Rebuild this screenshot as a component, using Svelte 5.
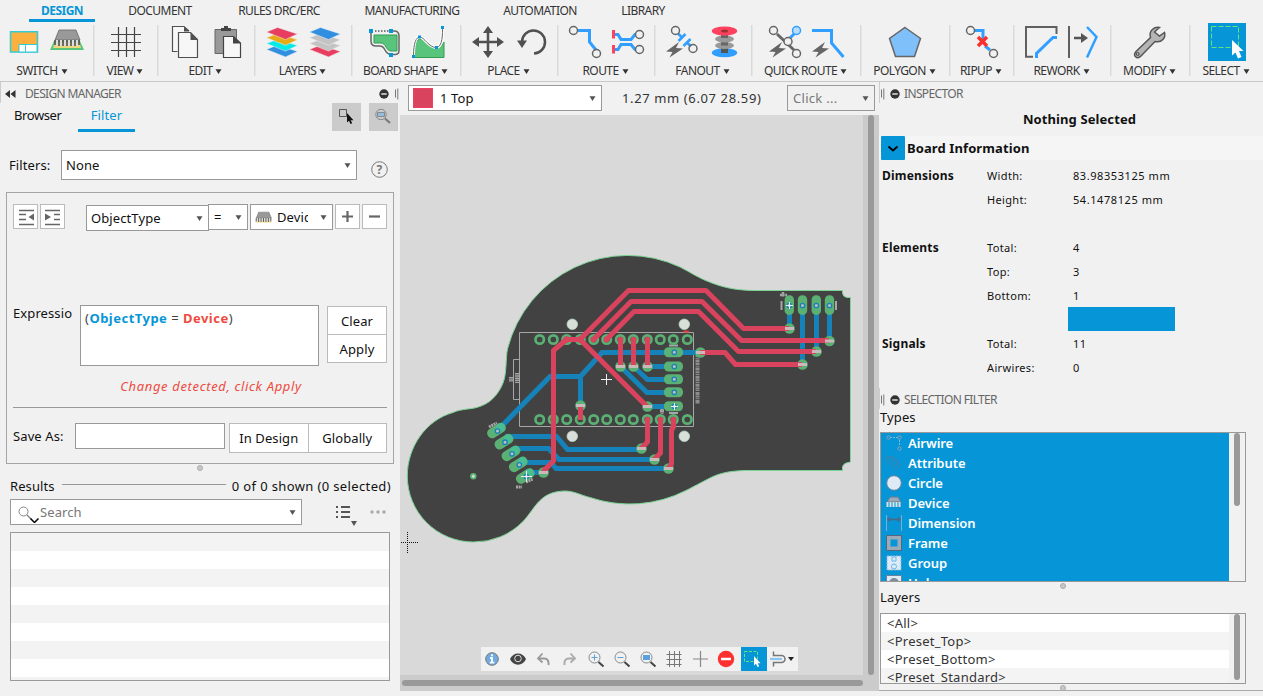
<script>
  const tabs = ['DESIGN', 'DOCUMENT', 'RULES DRC/ERC', 'MANUFACTURING', 'AUTOMATION', 'LIBRARY'];
  const tabWidths = [124, 72, 166, 100, 156, 50];
  const groups = [
    ['SWITCH', 0, 93], ['VIEW', 93, 64], ['EDIT', 157, 97], ['LAYERS', 254, 97], ['BOARD SHAPE', 351, 109],
    ['PLACE', 460, 97], ['ROUTE', 557, 97], ['FANOUT', 654, 97], ['QUICK ROUTE', 751, 109], ['POLYGON', 860, 89],
    ['RIPUP', 949, 64], ['REWORK', 1013, 97], ['MODIFY', 1110, 79], ['SELECT', 1189, 74]
  ];
  const padX = [539.7, 553.3, 566.7, 580.3, 593.7, 606.7, 620.3, 633.3, 647.3, 660.3, 673.3, 687.3];
  const vias = [
    [789.5, 328.5], [829.5, 341], [816.5, 351.5], [802.5, 364.5], [700.5, 352.5], [620.5, 366.5], [633.5, 366.5],
    [647.5, 366.5], [647.5, 406.5], [580.5, 405.5], [543.5, 472.5], [641.5, 448.5], [654.5, 459.5], [668.5, 468.5]
  ];
  const slant = [[496.5, 430.5], [504, 441.7], [511, 453.3], [518.3, 464.3], [525.3, 476]];
  const headX = [789.3, 802.5, 816.3, 829.5];
  const midY = [352.3, 366.5, 379.3, 392.3, 406.3];
  const info = [
    ['Dimensions', 'Width:', '83.98353125 mm'], ['', 'Height:', '54.1478125 mm'], ['', '', ''],
    ['Elements', 'Total:', '4'], ['', 'Top:', '3'], ['', 'Bottom:', '1'], ['', '', 'bar'],
    ['Signals', 'Total:', '11'], ['', 'Airwires:', '0']
  ];
  const types = ['Airwire', 'Attribute', 'Circle', 'Device', 'Dimension', 'Frame', 'Group', 'Hole'];
  const layers = ['<All>', '<Preset_Top>', '<Preset_Bottom>', '<Preset_Standard>'];
  const tools = ['info', 'eye', 'undo', 'redo', 'in', 'out', 'fit', 'grid', 'cross', 'stop', 'select', 'snap'];
</script>

{#snippet caret()}<svg class="caret" width="7" height="7" viewBox="0 0 7 7"><path d="M.5 1.2h6L3.5 6z" /></svg>{/snippet}
{#snippet minus()}<svg width="10" height="10" viewBox="0 0 10 10"><circle cx="5" cy="5" r="4.7" fill="#333" /><path d="M2.3 5h5.4" stroke="#eee" stroke-width="1.4" /></svg>{/snippet}
{#snippet grip()}<svg width="4" height="12" viewBox="0 0 4 12"><path d="M.5 1.5v8M2.8.5v11" stroke="#777" /></svg>{/snippet}
{#snippet bolt(x, y)}<path transform="translate({x} {y})" d="M13 0L0 9.500l6.500.5-3 5.500L17 6.500l-7-.5z" fill="#666" />{/snippet}
{#snippet chip(pcb)}
  {#if pcb}<path d="M54 41h26l4 9H50z" fill="#59c57c" /><path d="M55 42h24l2 6H53z" fill="#ebd87d" />{:else}<path d="M54 44h26v3H54z" fill="#ebd87d" />{/if}
  <path d="M59 30h17l4 10H55z" fill="#999" stroke="#666" stroke-width=".8" />
  <path d="M57 40v6M61 40v6M65 40v6M69 40v6M73 40v6M77 40v6" stroke="#ddd" stroke-width="2" />
  <path d="M55 40v5M59 40v6M63 40v6M67 40v6M71 40v6M75 40v6M79 40v5" stroke="#484848" stroke-width="1.5" />
{/snippet}
{#snippet tiles(x, c)}
  {#each [3, 2, 1, 0] as i}
    <path transform="translate({x} {27.5 + i * 5.8})" d="M0 4.5L11 0L31 6.5L19 12z" fill={c[i]} stroke="#f1f1f1" stroke-width=".5" />
  {/each}
{/snippet}

<div class="app">
  <nav class="tabs">
    {#each tabs as t, i}
      <span class="tab" class:on={i === 0} style:width="{tabWidths[i]}px"><b>{t}</b></span>
    {/each}
  </nav>
  <section class="ribbon">
    {#each groups as [name, x, w], i}
      <div class="group" style:width="{w}px">
        <svg class="gi" width={w} height="40" viewBox="{x} 22 {w} 40" fill="none">
          {#if i === 0}
            <path d="M10.5 31.8h27v20.3h-27z" fill="#fbb03f" stroke="#35cbd3" stroke-width="1.5" />
            <path d="M19 44.5h18v7.5H19zM25.5 44.5V52" fill="#fff" stroke="#35cbd3" />
            {@render chip(true)}
          {:else if i === 1}
            <path d="M118.500 27v30M126.500 27v30M134.500 27v30M111 34.500h30M111 42.500h30M111 50.500h30" stroke="#444" stroke-width="1.200" />
          {:else if i === 2}
            <g stroke="#505050" stroke-width="1.200" fill="#f7f7f7"><path d="M189 31l-5-4.500h-11.500v25h5" /><path d="M178.500 32.500h12l7 7v18h-19z" /></g>
            <path d="M190.500 32v8h7.500zM184 26.500v5h5z" fill="#505050" />
            <path d="M215 29.500h21.500v24H215z" fill="#999" stroke="#666" /><path d="M221 28h3v-2h4v2h3v3h-10z" fill="#444" />
            <path d="M223.500 36.500h10l7 6.500v14.500h-17z" fill="#f7f7f7" stroke="#444" stroke-width="1.200" /><path d="M233 36v7.500h8z" fill="#444" />
          {:else if i === 3}
            {@render tiles(266.500, ['#e73e5f', '#e8ab18', '#06eae9', '#318fe2'])}
            {@render tiles(309.500, ['#318fe2', '#c3c3c3', '#c3c3c3', '#e73e5f'])}
          {:else if i === 4}
            <path d="M394 35h23v16h-6c-5 0-5-8-10-8h-7z" fill="#59c57c" stroke="#329c54" transform="translate(-20 0)" />
            <path d="M371 31v10q0 5 5 5h4q3 0 5 4t6 4.500h1M392 54.500h3q4 0 4-4V36q0-5-5-5h-3" stroke="#666" stroke-width="1.500" />
            <path d="M375 31h15" stroke="#555" stroke-width="1.500" stroke-dasharray="1.500 1.500" />
            <path d="M369 29h4v4h-4zM389 29h4v4h-4zM389 53h4v4h-4z" fill="#0696d7" />
            <path d="M413.500 57.500C413.500 45 416 39 421 39s9 9 15 9 7-5 8-6v15.500z" fill="#59c57c" stroke="#329c54" />
            <path d="M413.500 56C413.500 43 416 37 420 37s9 10.500 16 10.500 6.500-15 6.500-20" stroke="#fff" stroke-width="3" />
            <path d="M413.500 56C413.500 43 416 37 420 37s9 10.500 16 10.500 6.500-15 6.500-20" stroke="#666" />
            <path d="M412 55h3v3h-3zM418 35.500h3v3h-3zM435 46h3v3h-3zM441 26h3v3h-3z" fill="#0696d7" />
          {:else if i === 5}
            <path d="M488 31v22M477 42h22" stroke="#505050" stroke-width="2.500" />
            <path d="M488 26l5 7h-10zM488 58l5-7h-10zM472 42l7-5v10zM504 42l-7-5v10z" fill="#505050" />
            <path d="M522 42a11.500 11.500 0 1 1 12 11.500" stroke="#505050" stroke-width="2.500" /><path d="M517 40.500h10l-5 7.500z" fill="#505050" />
          {:else if i === 6}
            <path d="M578 30.500h11.500V42l6.500 8" stroke="#319fff" stroke-width="3" />
            <g stroke="#666" stroke-width="1.500"><circle cx="573.500" cy="30.500" r="4" /><circle cx="596.500" cy="53.500" r="4" /></g>
            <path d="M615 34.500h3l3 5h10l4-5h1M615 49.500h3l3-5h10l4 5h1" stroke="#319fff" stroke-width="3" />
            <path d="M612 30h3v8.500h-3zM612 45h3v8.500h-3z" fill="#ff405f" />
            <g stroke="#666" stroke-width="1.500"><circle cx="639.500" cy="34.500" r="4" /><circle cx="639.500" cy="49.500" r="4" /></g>
          {:else if i === 7}
            {@render bolt(666, 42)}
            <path d="M678 33.500l4 4M687 42.500l4 4M678.500 41l7-7M683.500 46l7-7" stroke="#319fff" stroke-width="2.600" />
            <g stroke="#666" stroke-width="1.500"><circle cx="675.500" cy="30.500" r="4" /><circle cx="693" cy="48.500" r="4" /></g>
            <ellipse cx="724.500" cy="52.800" rx="12.700" ry="4.500" fill="#319fff" />
            <path d="M721 34h7v19h-7z" fill="#555" /><ellipse cx="724.500" cy="45.500" rx="9.500" ry="3.500" fill="#999" /><ellipse cx="724.500" cy="39" rx="9.500" ry="3.500" fill="#999" />
            <path d="M721 34h7v4h-7zM721 42.500h7v3h-7z" fill="#666" /><ellipse cx="724.500" cy="31" rx="12.700" ry="4.500" fill="#ff405f" /><ellipse cx="724.500" cy="31" rx="3.500" ry="1.500" fill="#933" />
          {:else if i === 8}
            {@render bolt(769, 42)}
            <path d="M777 34l17 16" stroke="#666" stroke-width="3" /><path d="M790 38l5-5" stroke="#319fff" stroke-width="3" />
            <g stroke="#666" stroke-width="1.500" fill="#f1f1f1"><circle cx="773.500" cy="30.500" r="4" /><circle cx="788" cy="41.500" r="4" /><circle cx="796.500" cy="53.500" r="4" /></g>
            <circle cx="796.500" cy="30.500" r="4" fill="#b9ddfb" stroke="#319fff" stroke-width="1.500" />
            {@render bolt(812, 42)}<path d="M812 30.500h19.500V43l12 14" stroke="#319fff" stroke-width="3" />
          {:else if i === 9}
            <path d="M905 27.500l15.500 11-6 18h-19l-6-18z" fill="#7fc0fb" stroke="#666" stroke-width="1.500" />
          {:else if i === 10}
            <path d="M975 30.500h8V39M985 46l5 4" stroke="#319fff" stroke-width="3" />
            <g stroke="#666" stroke-width="1.500"><circle cx="970.500" cy="30.500" r="4" /><circle cx="993.500" cy="53.500" r="4" /></g>
            <path d="M978 37l9 9M987 37l-9 9" stroke="#fa302e" stroke-width="3.500" />
          {:else if i === 11}
            <path d="M1033 56.700h-7V27h30.500v7" stroke="#606060" stroke-width="2" /><path d="M1036.500 58v-4.500l16.500-16h4" stroke="#319fff" stroke-width="3" />
            <path d="M1069 26v32" stroke="#606060" stroke-width="2" /><path d="M1074 38h9" stroke="#555" stroke-width="2.500" /><path d="M1081 33l7 5-7 5z" fill="#555" />
            <path d="M1087 27l9.500 10-9.500 20.500" stroke="#319fff" stroke-width="2.500" />
          {:else if i === 12}
            <path d="M1159.500 27.500c-5-1-11 3-9 10l-14.500 14c-4 4 1 8.500 5 4.500l14-14.500c7 1.500 11-4 9.500-9l-5 3.500-5-4z" fill="#b5b5b5" stroke="#555" stroke-width="1.500" /><circle cx="1137.700" cy="54" r="1.500" stroke="#444" />
          {:else}
            <path d="M1208 23h38v38h-38z" fill="#0696d7" /><path d="M1211.500 26.500h27v21h-27z" stroke="#65e27b" stroke-dasharray="5 2" />
            <path d="M1232 40v15.500l3.500-3 2.500 6 3.500-1.500-2.500-6h4.500z" fill="#fff" />
          {/if}
        </svg>
        <div class="glabel" class:first={i === 0}><span>{name}</span>{@render caret()}</div>
      </div>
    {/each}
  </section>

  <main>
    <aside class="left">
      <header class="phead">
        <svg width="11" height="8" viewBox="0 0 11 8"><path d="M5 0v8L0 4zM10.500 0v8l-5-4z" fill="#333" /></svg>
        <span class="ptitle">DESIGN MANAGER</span><i class="grow"></i>{@render minus()}{@render grip()}
      </header>
      <div class="ltabs">
        <span class="lt browser">Browser</span><span class="lt filter">Filter</span><i class="grow"></i>
        <div class="gbtn"><svg width="28" height="28" fill="none"><path d="M7.500 6.500h7v7h-7z" stroke="#555" /><path d="M15 10v9.500l2-1.700 1.500 3.200 1.700-.8-1.500-3h2.800z" fill="#111" /></svg></div>
        <div class="gbtn"><svg width="28" height="28" fill="none"><circle cx="12" cy="11.500" r="5.200" stroke="#888" /><path d="M8.500 9.500h7v4h-7z" fill="#8fbfe4" stroke="#888" /><path d="M16 15.500l5 4.500" stroke="#777" stroke-width="2" /></svg></div>
      </div>
      <div class="filters">
        <span class="lbl">Filters:</span><div class="combo big"><span>None</span>{@render caret()}</div>
        <svg class="help" width="17" height="17"><circle cx="8.500" cy="8.500" r="7.800" fill="none" stroke="#777" /><text x="8.500" y="13" text-anchor="middle">?</text></svg>
      </div>
      <div class="box">
        <div class="cond">
          <div class="sq"><svg width="23" height="23"><path d="M5 5.500h15M5 9.500h7M5 14.500h7M5 19.500h15" stroke="#666" stroke-width="1.500" /><path d="M20 8.500v7l-5.500-3.500z" fill="#666" /></svg></div>
          <div class="sq"><svg width="23" height="23"><path d="M4 5.500h15M13 9.500h6M13 14.500h6M4 19.500h15" stroke="#666" stroke-width="1.500" /><path d="M4 8.500v7l6-3.500z" fill="#666" /></svg></div>
          <div class="combo ot"><span>ObjectType</span>{@render caret()}</div>
          <div class="combo eq"><span>=</span>{@render caret()}</div>
          <div class="combo dv"><svg width="17" height="12" viewBox="53 29 28 18" fill="none">{@render chip(false)}</svg><span class="clip">Device</span>{@render caret()}</div>
          <div class="sq pl"><svg width="23" height="23"><path d="M11.500 6v11M6 11.500h11" stroke="#666" stroke-width="2.200" /></svg></div>
          <div class="sq"><svg width="23" height="23"><path d="M6 11.500h11" stroke="#666" stroke-width="2.200" /></svg></div>
        </div>
        <div class="expr">
          <span class="el">Expression:</span>
          <div class="area">(<b class="bl">ObjectType</b> = <b class="rd">Device</b>)</div>
          <div class="stack"><span>Clear</span><span>Apply</span></div>
        </div>
        <p class="msg">Change detected, click Apply</p>
        <div class="save"><span>Save As:</span><div class="inp"></div><div class="pair"><span>In Design</span><span>Globally</span></div></div>
      </div>
      <i class="dot"></i>
      <div class="res"><span>Results</span><i></i><span class="cnt">0 of 0 shown (0 selected)</span></div>
      <div class="srow">
        <div class="combo search"><svg width="24" height="22" fill="none"><circle cx="8.500" cy="10.500" r="4.500" stroke="#888" /><path d="M12 14l4 4" stroke="#888" stroke-width="1.500" /><path d="M15.500 17.500l4 4 4-4" stroke="#000" stroke-width="1.500" /></svg><span>Search</span>{@render caret()}</div>
        <svg class="li" width="52" height="26"><path d="M5 8h9M5 13h9M5 18h9" stroke="#555" stroke-width="2" /><path d="M0 8h2M0 13h2M0 18h2" stroke="#555" stroke-width="2" /><path d="M15 22h6l-3 5z" fill="#555" /><g fill="#aaa"><circle cx="36" cy="13" r="1.700" /><circle cx="42" cy="13" r="1.700" /><circle cx="48" cy="13" r="1.700" /></g></svg>
      </div>
      <div class="table"></div>
    </aside>

    <section class="mid">
      <div class="bar">
        <div class="combo layer"><i></i><span>1 Top</span>{@render caret()}</div>
        <span class="coord">1.27 mm (6.07 28.59)</span>
        <div class="combo click"><span>Click ...</span>{@render caret()}</div>
      </div>
      <div class="canvas">
        <svg width="463" height="560" viewBox="400 115 463 560" fill="none">
          <path d="M453 412.500C463 408 472 410 481 406C492 402 499 393 503 383C507 373 505.500 358 507.500 349A124 124 0 0 1 680 267C690 272 700 279 712 283C725 288 738 290.500 756 290.500H842.500V293Q843 297 847 297.500H850.500V462Q843 463 842.500 467V470.500H745C730 471 720 473 711 477.500C700 483 695 486 686 490.500A124 124 0 0 1 590 497.500C580 495 574 491 565 491C540 491.500 536 507 523.500 521A68 68 0 0 1 473.300 542A66 66 0 0 1 407.300 476C407.300 447 426 420 453 412.500z" fill="#424242" stroke="#7bd394" />
          <g stroke="#a6a6a6"><path d="M519.500 332.500h174v94h-174zM519.500 359.500h-6v40h6" /><path d="M781.500 301v9M836 301v9M669 345.500h9M669 413h9" stroke-width="2" /><path d="M697.500 355v49" stroke-width="4" stroke-dasharray="2 .7 1 .8 3 .6" opacity=".75" /><path d="M517 373v10M511 377v5" stroke-width="4" stroke-dasharray="1.500 .7" /><path d="M780 295h7M783 292v5" stroke-width="2.500" stroke-dasharray="2 .6" /><path d="M489 427l8-4M516 487h6M526 482l7-3M660 411h4M662 408v6" stroke-width="3" stroke-dasharray="2 .6" /></g>
          <g stroke="#1583ba" stroke-width="5">
            <path d="M497 431L550 376.500H580.500L602 352.500H700M580.500 376.500V405M505 436.500H556.500L567.500 449.500H641M514 448.500H548.500L559 459.500H654M521 462.500H551L556 468.500H668M528 472.500H543M789.500 305V328M802.500 305V364M816.500 305V351M829.500 305V341M647.500 366.500H674M633.500 366.500L647.500 379.500H674M620.500 366.500L647 392.500H674M647.500 406.500H674" />
          </g>
          <g stroke="#5bb074" stroke-width="2.700">
            {#each padX as x}<circle cx={x} cy="339.500" r="4.200" /><circle cx={x} cy="419.500" r="4.200" />{/each}
          </g>
          <g fill="#5bb074">
            {#each slant as [x, y]}<rect x={x - 10} y={y - 5} width="20" height="10" rx="4.500" transform="rotate(-32 {x} {y})" /><ellipse cx={x + 5} cy={y - .5} rx="4.500" ry="4.200" fill="#49bd93" transform="rotate(-32 {x} {y})" />{/each}
            {#each headX as x}<rect x={x - 4.700} y="295.300" width="9.400" height="19.600" rx="4.500" />{/each}
            {#each midY as y}<rect x="664" y={y - 5} width="19" height="10" rx="4.500" />{/each}
            {#each vias as [x, y]}<circle cx={x} cy={y} r="5.300" />{/each}
            <circle cx="473.300" cy="476.300" r="3.200" />
          </g>
          <g stroke="#d9435e" stroke-width="5" stroke-linejoin="round">
            <path d="M580 339.500L628.500 290.500H706L743.500 328.500H789M593.500 339.500L631 301.500H702L741.500 340.500H829M606.500 339.500L634 311.500H698.500L738.500 351.500H816M700 352.500H725L735.500 364.500H802M580 339.500H566.500L553.500 350.500V461L543 471.500M580 339.500L647 406.500M620.500 339.500V366M633.500 339.500V366M647.500 339.500V366M580.500 405V420M647.500 419.500V442L641 448.500M660.500 419.500V453L654 459.500M673.500 419.500V427L671.500 430V464L668 468.500" />
          </g>
          <g fill="#d9435e"><circle cx="566.500" cy="339.500" r="3.300" /><circle cx="580.300" cy="339.500" r="3.300" /><circle cx="593.500" cy="339.500" r="3" /><circle cx="606.500" cy="339.500" r="3" /><circle cx="620.500" cy="339.500" r="2.800" /><circle cx="633.500" cy="339.500" r="2.800" /><circle cx="647.500" cy="339.500" r="2.800" /><circle cx="647.500" cy="419.500" r="2.800" /><circle cx="660.500" cy="419.500" r="2.800" /><circle cx="673.500" cy="419.500" r="2.800" /></g>
          {#each vias as [x, y]}<rect x={x - 4.500} y={y - 1.500} width="9" height="3" fill="#c9b9bb" />{/each}
          <g fill="#bdbdbd" stroke="#1583ba" stroke-width="1.300">
            {#each slant as [x, y]}<circle cx={x + 1} cy={y + .500} r="2.200" />{/each}
            {#each headX as x}<circle cx={x} cy="305.500" r="2.200" />{/each}
            {#each midY as y}<circle cx="674.300" cy={y} r="2.200" />{/each}
          </g>
          <g fill="#d9e0da" stroke="#bcd8c3" stroke-width=".7"><circle cx="572.300" cy="324.300" r="5.300" /><circle cx="684.300" cy="324.300" r="5.300" /><circle cx="572.300" cy="436.300" r="5.300" /><circle cx="684.300" cy="436.300" r="5.300" /><circle cx="473.300" cy="476.300" r="1.300" /></g>
          <path d="M606.500 374v11M601 379.500h11M789.500 302v7M786 305.500h7M674.500 403v7M671 406.500h7M526.500 471v11M521 476.500h11" stroke="#eee" />
          <path d="M683.500 331.500h5.500" stroke="#e83838" stroke-width="2" />
          <path d="M407.500 532v21M401 542.500h17" stroke="#111" stroke-dasharray="1 1" />
        </svg>
        <div class="toolbar">
          {#each tools as t}
            <svg class:sel={t === 'select'} width={t === 'snap' ? 31 : 26} height="24" fill="none">
              {#if t === 'info'}<circle cx="11" cy="12" r="6.300" fill="#6fabe0" stroke="#777" /><path d="M11 7.200v2M9 11h2v4.500M8.800 15.700h4.500" stroke="#fff" stroke-width="1.800" />
              {:else if t === 'eye'}<path d="M3 12c3-7.500 13-7.500 16 0-3 7.500-13 7.500-16 0z" fill="#444" /><circle cx="11" cy="11.500" r="3.300" stroke="#ddd" />
              {:else if t === 'undo'}<path d="M6 11.500h5c4 0 5 3 4.500 6.500" stroke="#999" stroke-width="2" /><path d="M9.500 6.500L5 11.500l4.500 4" stroke="#999" stroke-width="1.800" />
              {:else if t === 'redo'}<path d="M15 11.500h-5c-4 0-5 3-4.500 6.500" stroke="#aaa" stroke-width="2" /><path d="M11.500 6.500l4.500 5-4.500 4" stroke="#aaa" stroke-width="1.800" />
              {:else if t === 'in' || t === 'out' || t === 'fit'}
                <circle cx="9.500" cy="10.500" r="5.500" stroke="#888" /><path d="M13.500 15l5 4.500" stroke="#444" stroke-width="2" />
                {#if t === 'fit'}<path d="M6 8h7v5H6z" fill="#5aa2df" />{:else}<path d={t === 'in' ? 'M6.5 10.500h6M9.500 7.500v6' : 'M6.5 10.500h6'} stroke="#5aa2df" />{/if}
              {:else if t === 'grid'}<path d="M6.500 4v16M11.500 4v16M16.500 4v16M3.500 7.500h15M3.500 12.500h15M3.500 17.500h15" stroke="#777" />
              {:else if t === 'cross'}<path d="M11.500 4v16M4 12h15" stroke="#888" stroke-width="1.200" />
              {:else if t === 'stop'}<circle cx="11" cy="12" r="8.200" fill="#ff3030" /><path d="M6 12h10" stroke="#fff" stroke-width="2.500" />
              {:else if t === 'select'}<path d="M3.500 4.500h13v10h-13z" stroke="#65e27b" stroke-dasharray="3 1.500" /><path d="M13 9v9.500l2-1.700 1.500 3.200 1.700-.8-1.500-3h2.800z" fill="#fff" />
              {:else}<path d="M6.500 4.500v4h8a3.500 3.500 0 0 1 0 7h-8v4" stroke="#777" stroke-width="1.500" /><path d="M3 12h12" stroke="#8cc4f0" stroke-width="2.200" /><path d="M21 10h6l-3 4z" fill="#222" />{/if}
            </svg>
          {/each}
        </div>
      </div>
      <div class="vs"><i></i></div>
      <div class="hs"><i></i></div>
    </section>

    <aside class="right">
      <header class="phead r">{@render grip()}{@render minus()}<span class="ptitle">INSPECTOR</span></header>
      <h3>Nothing Selected</h3>
      <div class="sec"><i><svg width="24" height="24" fill="none"><path d="M7.500 10.500l4.500 4 4.500-4" stroke="#000" stroke-width="1.800" /></svg></i><b>Board Information</b></div>
      <div class="info">
        {#each info as [a, b, c]}<b>{a}</b><span>{b}</span>{#if c === 'bar'}<i class="fill"></i>{:else}<span class="val">{c}</span>{/if}{/each}
      </div>
      <header class="phead r sf">{@render grip()}{@render minus()}<span class="ptitle">SELECTION FILTER</span></header>
      <div class="cap">Types</div>
      <div class="list types">
        <div class="rows">
          {#each types as t, i}
            <div class="row"><svg width="16" height="16" fill="none">
              {#if i === 0}<path d="M4 2.500h8M13.500 5v6" stroke="#7bb9e0" stroke-dasharray="2 1" /><g stroke="#8f9fb0"><circle cx="2.500" cy="2.500" r="1.700" /><circle cx="13.500" cy="2.500" r="1.700" /><circle cx="13.500" cy="13.500" r="1.700" /></g>
              {:else if i === 1}<path d="M1 1.500h6l8 8-5 5-9-8zM5 7l3-3 4 5-3 2z" stroke="#3982ae" /><circle cx="4" cy="4" r="1" stroke="#3982ae" />
              {:else if i === 2}<circle cx="8" cy="8" r="7.300" fill="#dfeaf7" stroke="#68829b" />
              {:else if i === 3}<path d="M4 2h8l3 5H1z" fill="#9ba9b8" stroke="#647d92" /><path d="M1.500 7v5M4.500 7v5M7.500 7v5M10.500 7v5M13.500 7v5" stroke="#dae2e5" stroke-width="2" />
              {:else if i === 4}<path d="M.500 0v16M15.500 0v16" stroke="#7faed0" /><path d="M3 4.500h10M4.500 2.500l-2.500 2 2.500 2M11.500 2.500l2.500 2-2.500 2" stroke="#496a87" stroke-width="1.500" />
              {:else if i === 5}<path d="M2.500 2.500h11v11h-11z" stroke="#9ba9b8" stroke-width="4" /><path d="M.500.500h15v15H.500z" stroke="#53687d" />
              {:else if i === 6}<path d="M1 1h14v14H1z" fill="#dfeaf7" stroke="#91b7d6" stroke-dasharray="2 1" /><path d="M6 2h4v4H6z" stroke="#62b8ec" /><circle cx="8" cy="11.500" r="2.500" stroke="#62b8ec" />
              {:else}<path d="M.500.500h15v15H.500z" fill="#dfeaf7" stroke="#68829b" /><circle cx="8" cy="8" r="5" fill="#7f8b98" />{/if}
            </svg><b>{t}</b></div>
          {/each}
        </div>
        <i class="thumb"></i>
      </div>
      <i class="dot"></i>
      <div class="cap c2">Layers</div>
      <div class="list layers">
        <div class="rows">{#each layers as l}<div class="row">{l}</div>{/each}</div>
        <i class="thumb"></i>
      </div>
      <i class="dot d2"></i>
    </aside>
  </main>
</div>

<style>
  :global(body) { margin: 0; background: #f1f1f1; }
  .app, .app * { box-sizing: border-box; }
  .app { width: 1263px; height: 696px; overflow: hidden; display: flex; flex-direction: column; background: #f1f1f1; font: 13px/18px "Noto Sans", "Open Sans", sans-serif; color: #111; white-space: nowrap; letter-spacing: .1px; }
  i { display: block; font-style: normal; }
  svg { display: block; flex: none; }
  .grow { flex: 1; }
  .tabs { display: flex; height: 22px; flex: none; font-size: 12px; line-height: 21px; letter-spacing: -.55px; color: #333; }
  .tab { text-align: center; }
  .tab b { display: inline-block; font-weight: 400; height: 22px; }
  .tab.on b { font-weight: 700; color: #0696d7; padding: 0 11.5px; border-bottom: 3px solid #0696d7; letter-spacing: -.5px; }
  .ribbon { display: flex; height: 60px; flex: none; border-bottom: 1px solid #c8c8c8; }
  .group { height: 60px; background: linear-gradient(#dadada, #dadada) left 3px / 1.500px 51px no-repeat; }
  .group:first-child { background: none; }
  .glabel { display: flex; align-items: center; justify-content: center; gap: 3px; font-size: 12px; line-height: 18px; height: 18px; color: #333; letter-spacing: -.55px; }
  .glabel .caret, .glabel :global(.caret) { fill: #333; }
  .first { padding-right: 9px; }
  .caret { fill: #555; }
  main { display: flex; flex: 1; min-height: 0; }
  .left { width: 400px; display: flex; flex-direction: column; }
  .phead { display: flex; align-items: center; height: 21px; padding: 2px 1px 0 4px; flex: none; color: #666; font-size: 12px; letter-spacing: -.65px; border-left: 1px solid #ccc; }
  .left .ptitle { margin-left: 9px; }
  .left .phead > :global(svg:last-child) { margin-left: 6px; }
  .ltabs { display: flex; height: 29px; flex: none; gap: 8px; padding-right: 2px; }
  .lt { height: 29px; line-height: 25px; }
  .browser { margin-left: 14px; width: 48px; letter-spacing: -.4px; }
  .filter { margin-left: 8px; width: 57px; text-align: center; color: #0696d7; border-bottom: 3px solid #0696d7; }
  .gbtn { width: 29px; height: 28px; background: #cbcbcb; }
  .filters { display: flex; align-items: center; margin-top: 18px; height: 30px; padding-left: 9px; flex: none; }
  .lbl { width: 52px; }
  .combo { display: flex; align-items: center; justify-content: space-between; border: 1px solid #999; background: #fff; padding: 0 5px; flex: none; }
  .big { width: 296px; height: 30px; padding-left: 4px; }
  .help { margin: 8px 0 0 14px; }
  .help text { font: 700 12px "Noto Sans"; fill: #777; }
  .box { margin: 12px 6px 0; height: 272px; border: 1px solid #a5a5a5; padding: 11px 6px 0; flex: none; }
  .cond { display: flex; height: 27px; align-items: flex-start; gap: 2px; }
  .sq { width: 25px; height: 25px; border: 1px solid #bbb; background: #fff; }
  .ot { margin: 1px 0 0 19px; width: 123px; height: 26px; padding-left: 4px; }
  .eq { margin-left: -3px; width: 40px; height: 26px; }
  .dv { width: 83px; height: 26px; padding-left: 4px; }
  .clip { width: 31px; overflow: hidden; margin-right: 7px; }
  .expr { display: flex; margin-top: 74px; height: 61px; line-height: 17px; }
  .el { width: 59px; overflow: hidden; margin-right: 8px; }
  .area { width: 239px; border: 1px solid #999; background: #fff; padding: 4px; color: #444; letter-spacing: .48px; }
  .bl { color: #0696d7; } .rd { color: #ee4a41; }
  .stack { margin: 1px 0 0 8px; width: 60px; height: 57px; border: 1px solid #bbb; background: #fff; text-align: center; line-height: 28px; }
  .stack span { display: block; height: 27px; }
  .stack span + span { border-top: 1px solid #bbb; }
  .msg { margin: 11px 0 0; padding-left: 22px; text-align: center; font-style: italic; color: #ee4a41; height: 31px; border-bottom: 1px solid #999; letter-spacing: .65px; }
  .save { display: flex; margin-top: 15px; line-height: 26px; }
  .save > span { width: 62px; }
  .inp { width: 150px; height: 26px; border: 1px solid #999; background: #fff; }
  .pair { display: flex; margin-left: 4px; width: 158px; height: 30px; border: 1px solid #bbb; background: #fff; text-align: center; line-height: 29px; }
  .pair span { flex: 1; }
  .pair span + span { border-left: 1px solid #bbb; }
  .dot { width: 6px; height: 6px; border-radius: 3px; background: #c8c8c8; border: 1px solid #aaa; margin: 1px auto 0 197px; flex: none; }
  .res { display: flex; margin-top: 6px; padding: 0 9px 0 10px; height: 18px; flex: none; }
  .res > i { flex: 1; height: 1px; background: #999; margin: 7px 6px 0 7px; }
  .cnt { letter-spacing: .37px; }
  .srow { display: flex; margin: 4px 0 0 10px; height: 26px; flex: none; }
  .search { width: 292px; padding-left: 4px; color: #777; }
  .search span { flex: 1; margin-left: 1px; padding-bottom: 1px; }
  .li { margin-left: 34px; overflow: visible; }
  .table { margin: 7px 0 0 10px; width: 380px; height: 149px; border: 1px solid #999; background: repeating-linear-gradient(#f3f3f3 0 18px, #fff 18px 36px); }

  .mid { width: 479px; display: grid; grid-template: 33px 560px 16px / 463px 16px; }
  .bar { grid-column: 1 / 3; display: flex; align-items: flex-start; padding: 3px 0 0 8px; color: #333; }
  .bar .combo { height: 26px; }
  .layer { width: 194px; color: #111; padding-left: 4px; }
  .layer i { width: 20px; height: 20px; background: #d9435e; border: 1px solid #f0405f; }
  .layer span { flex: 1; margin-left: 7px; }
  .coord { margin-left: 20px; width: 165px; line-height: 26px; letter-spacing: .62px; }
  .click { width: 88px; background: #f1f1f1; color: #777; letter-spacing: .3px; }
  .canvas { position: relative; background: #d9d9d9; }
  .toolbar { position: absolute; left: 81px; top: 532px; display: flex; background: #f1f1f1; }
  .sel { background: #0696d7; }
  .vs, .hs { background: #cbcbcb; }
  .vs i { width: 6px; height: 560px; margin-left: 5px; border-radius: 3px; background: #999; }
  .hs { grid-column: 1 / 3; }
  .hs i { width: 461px; height: 6px; margin: 5px 0 0 2px; border-radius: 3px; background: #999; }

  .right { width: 384px; height: 609px; display: flex; flex-direction: column; border-bottom: 1px solid #aaa; }
  .r { padding-left: 1px; }
  .r .ptitle { margin-left: 4px; }
  .r > :global(svg:first-child) { margin-right: 5px; }
  h3 { margin: 7px 0 8px; padding-left: 17px; font: 700 13px/18px "Noto Sans"; text-align: center; color: #111; flex: none; }
  .sec { display: flex; height: 24px; background: #f5f5f5; line-height: 24px; flex: none; padding-left: 2px; }
  .sec i { width: 24px; height: 24px; background: #0696d7; border-radius: 1px; margin-right: 2px; }
  .info { display: grid; grid-template-columns: 105px 86px 1fr; grid-auto-rows: 24px; padding: 4px 0 0 3px; height: 228px; flex: none; line-height: 24px; font-size: 11px; letter-spacing: .35px; }
  .info b { font-size: 12px; letter-spacing: .2px; line-height: 23px; }
  .val { letter-spacing: .57px; }
  .fill { width: 107px; height: 24px; margin: -1px 0 0 -5px; background: #0696d7; }
  .cap { height: 18px; margin-top: -1px; padding-left: 1px; line-height: 18px; flex: none; }
  .list { display: flex; margin: 6px 0 0 1px; width: 366px; border: 1px solid #999; overflow: hidden; flex: none; }
  .rows { width: 348px; flex: none; }
  .types { height: 150px; }
  .types .rows { background: #0696d7; }
  .types .row { display: flex; align-items: center; height: 20px; padding-left: 5px; gap: 6px; color: #fff; }
  .types b { font-weight: 600; letter-spacing: -.05px; }
  .thumb { width: 6px; height: 73px; background: #999; border-radius: 3px; margin-left: 5px; }
  .right .dot { margin-left: 181px; }
  .c2 { margin-top: 0; line-height: 17px; }
  .layers { height: 71px; margin-top: 6px; color: #333; letter-spacing: .25px; }
  .layers .row { height: 18px; padding-left: 6px; background: #fff; }
  .layers .row:nth-child(even) { background: #f4f4f4; }
  .layers .thumb { height: 66px; }
</style>
